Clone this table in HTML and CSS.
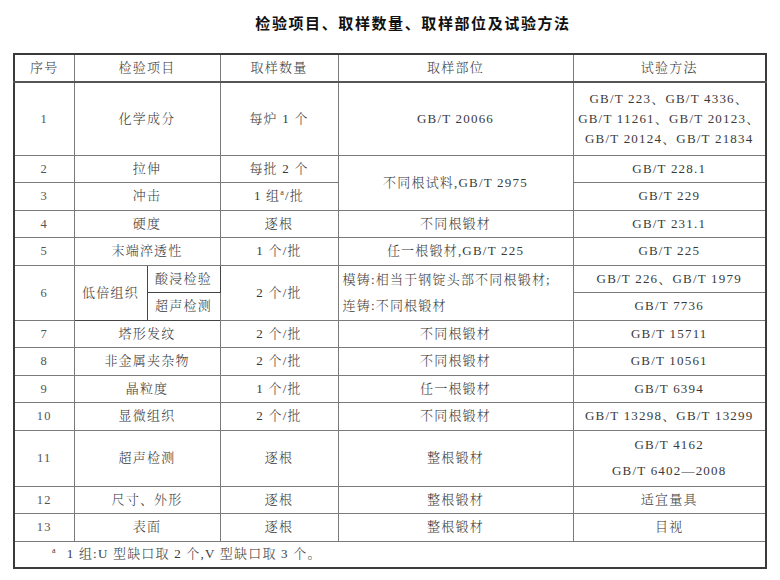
FILE: index.html
```html
<!DOCTYPE html>
<html lang="zh">
<head>
<meta charset="utf-8">
<link rel="stylesheet" href="styles.css">
</head>
<body>
<div class="page">
  <h1 class="title">检验项目、取样数量、取样部位及试验方法</h1>
  <table class="spec">
    <colgroup>
      <col class="c-no">
      <col class="c-item">
      <col class="c-sub">
      <col class="c-qty">
      <col class="c-pos">
      <col class="c-method">
    </colgroup>
    <thead>
      <tr class="r-head">
        <th>序号</th>
        <th colspan="2">检验项目</th>
        <th>取样数量</th>
        <th>取样部位</th>
        <th>试验方法</th>
      </tr>
    </thead>
    <tbody>
      <tr class="r-tall">
        <td class="num">1</td>
        <td colspan="2">化学成分</td>
        <td>每炉 1 个</td>
        <td>GB/T 20066</td>
        <td class="multi">GB/T 223、GB/T 4336、<br>GB/T 11261、GB/T 20123、<br>GB/T 20124、GB/T 21834</td>
      </tr>
      <tr class="r">
        <td class="num">2</td>
        <td colspan="2">拉伸</td>
        <td>每批 2 个</td>
        <td rowspan="2">不同根试料,GB/T 2975</td>
        <td>GB/T 228.1</td>
      </tr>
      <tr class="r">
        <td class="num">3</td>
        <td colspan="2">冲击</td>
        <td>1 组<sup>a</sup>/批</td>
        <td>GB/T 229</td>
      </tr>
      <tr class="r">
        <td class="num">4</td>
        <td colspan="2">硬度</td>
        <td>逐根</td>
        <td>不同根锻材</td>
        <td>GB/T 231.1</td>
      </tr>
      <tr class="r">
        <td class="num">5</td>
        <td colspan="2">末端淬透性</td>
        <td>1 个/批</td>
        <td>任一根锻材,GB/T 225</td>
        <td>GB/T 225</td>
      </tr>
      <tr class="r">
        <td class="num" rowspan="2">6</td>
        <td rowspan="2" class="dark">低倍组织</td>
        <td class="dark">酸浸检验</td>
        <td rowspan="2">2 个/批</td>
        <td rowspan="2" class="left">模铸:相当于钢锭头部不同根锻材;<br>连铸:不同根锻材</td>
        <td>GB/T 226、GB/T 1979</td>
      </tr>
      <tr class="r">
        <td class="dark">超声检测</td>
        <td>GB/T 7736</td>
      </tr>
      <tr class="r">
        <td class="num">7</td>
        <td colspan="2">塔形发纹</td>
        <td>2 个/批</td>
        <td>不同根锻材</td>
        <td>GB/T 15711</td>
      </tr>
      <tr class="r">
        <td class="num">8</td>
        <td colspan="2">非金属夹杂物</td>
        <td>2 个/批</td>
        <td>不同根锻材</td>
        <td>GB/T 10561</td>
      </tr>
      <tr class="r">
        <td class="num">9</td>
        <td colspan="2">晶粒度</td>
        <td>1 个/批</td>
        <td>任一根锻材</td>
        <td>GB/T 6394</td>
      </tr>
      <tr class="r">
        <td class="num">10</td>
        <td colspan="2">显微组织</td>
        <td>2 个/批</td>
        <td>不同根锻材</td>
        <td>GB/T 13298、GB/T 13299</td>
      </tr>
      <tr class="r-mid">
        <td class="num">11</td>
        <td colspan="2">超声检测</td>
        <td>逐根</td>
        <td>整根锻材</td>
        <td class="two">GB/T 4162<br>GB/T 6402—2008</td>
      </tr>
      <tr class="r">
        <td class="num">12</td>
        <td colspan="2">尺寸、外形</td>
        <td>逐根</td>
        <td>整根锻材</td>
        <td>适宜量具</td>
      </tr>
      <tr class="r">
        <td class="num">13</td>
        <td colspan="2">表面</td>
        <td>逐根</td>
        <td>整根锻材</td>
        <td>目视</td>
      </tr>
      <tr class="r-note">
        <td colspan="6" class="note"><sup class="mark">a</sup>1 组:U 型缺口取 2 个,V 型缺口取 3 个。</td>
      </tr>
    </tbody>
  </table>
</div>
</body>
</html>
```

FILE: styles.css
```css
html, body {
  margin: 0;
  padding: 0;
  background: #ffffff;
}

body {
  font-family: "Liberation Serif", "Noto Serif CJK SC", "Noto Sans CJK SC", serif;
  color: #3a3a3a;
}

.page {
  padding: 13px 0 0 13px;
  width: 752px;
}

.title {
  margin: 0 0 20px 0;
  padding-left: 48px;
  height: 20px;
  line-height: 20px;
  font-family: "Noto Sans CJK SC", sans-serif;
  font-size: 15px;
  font-weight: bold;
  letter-spacing: 1.6px;
  text-align: center;
  color: #111;
}

.spec {
  width: 752px;
  table-layout: fixed;
  border-collapse: collapse;
  border: 2px solid #3a3a3a;
  font-size: 13px;
  font-weight: 300;
  letter-spacing: 1.2px;
}

.c-no { width: 60px; }
.c-item { width: 73px; }
.c-sub { width: 73px; }
.c-qty { width: 118px; }
.c-pos { width: 235px; }
.c-method { width: 193px; }

.spec th,
.spec td {
  border: 1px solid #7a7a7a;
  padding: 0 2px;
  text-align: center;
  vertical-align: middle;
  font-weight: 300;
  white-space: nowrap;
  line-height: 18px;
}

.r-head { height: 28px; }
.r-head th { border-bottom: 2px solid #555; }
.r-tall { height: 73px; }
.r { height: 27.5px; }
.r-mid { height: 56px; }
.r-note { height: 27px; }

.spec td.num {
  color: #555;
  font-size: 12.5px;
}

.spec td.multi {
  line-height: 20px;
}

.spec td.two {
  line-height: 26px;
}

.spec td.left {
  text-align: left;
  padding-left: 4px;
  line-height: 26px;
}

.spec td.dark {
  border-color: #444;
}

.spec td.note {
  text-align: left;
  padding-left: 37px;
}

sup {
  font-size: 8px;
  line-height: 0;
  vertical-align: 5px;
}

sup.mark {
  margin-right: 10px;
}
```
